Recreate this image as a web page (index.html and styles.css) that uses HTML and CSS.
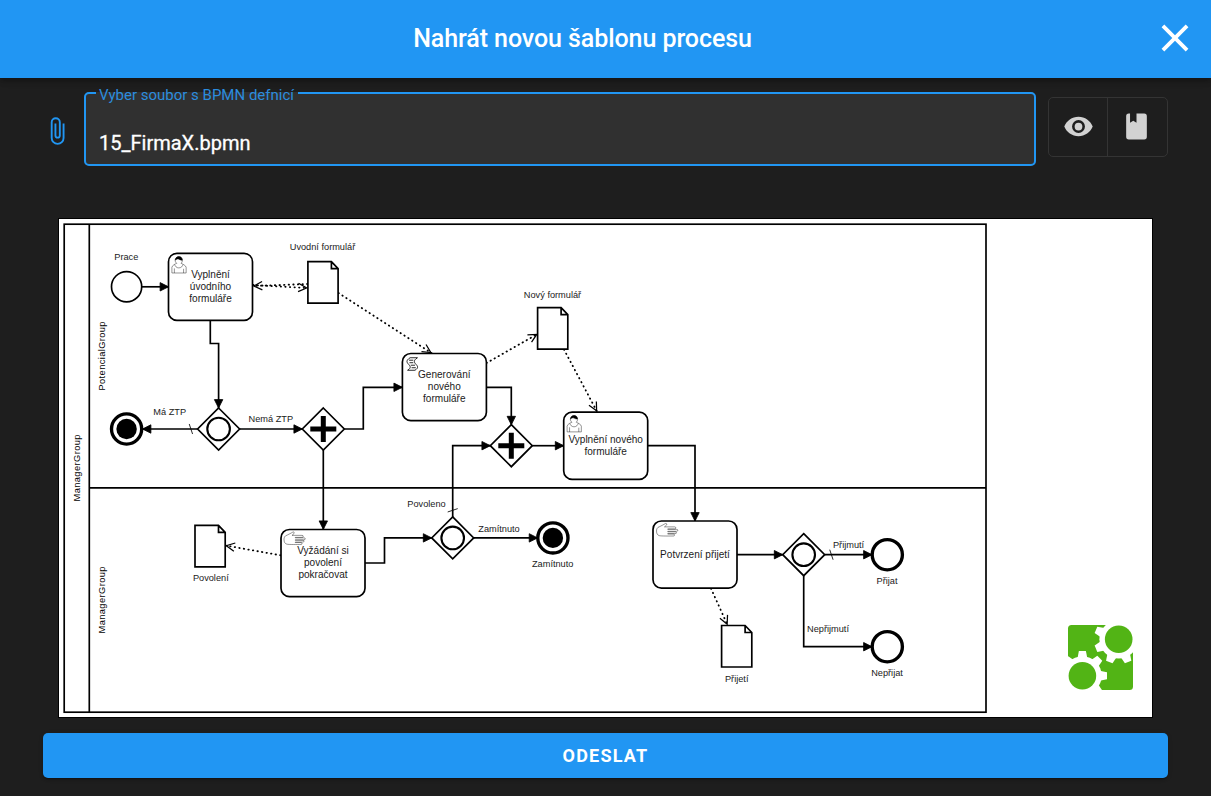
FILE: index.html
```html
<!DOCTYPE html>
<html lang="cs">
<head>
<meta charset="utf-8">
<title>Nahrát novou šablonu procesu</title>
<link rel="stylesheet" href="styles.css">
</head>
<body>
<header class="toolbar">
  <h1 class="toolbar-title">Nahrát novou šablonu procesu</h1>
  <button class="close" aria-label="Zavřít"><svg viewBox="0 0 24 24"><path d="M19 6.41L17.59 5 12 10.59 6.41 5 5 6.41 10.59 12 5 17.59 6.41 19 12 13.41 17.59 19 19 17.59 13.41 12z"/></svg></button>
</header>
<main class="content">
  <div class="file-row">
    <svg class="clip" viewBox="0 0 24 24"><path d="M16.5,6V17.5A4,4 0 0,1 12.5,21.5A4,4 0 0,1 8.5,17.5V5A2.5,2.5 0 0,1 11,2.5A2.5,2.5 0 0,1 13.5,5V15.5A1,1 0 0,1 12.5,16.5A1,1 0 0,1 11.5,15.5V6H10V15.5A2.5,2.5 0 0,0 12.5,18A2.5,2.5 0 0,0 15,15.5V5A4,4 0 0,0 11,1A4,4 0 0,0 7,5V17.5A5.5,5.5 0 0,0 12.5,23A5.5,5.5 0 0,0 18,17.5V6H16.5Z"/></svg>
    <fieldset class="field">
      <legend class="field-label">Vyber soubor s BPMN defnicí</legend>
      <div class="field-value">15_FirmaX.bpmn</div>
    </fieldset>
    <div class="btn-group">
      <button class="group-btn" aria-label="Náhled"><svg viewBox="0 0 24 24"><path d="M12 9a3 3 0 0 0-3 3 3 3 0 0 0 3 3 3 3 0 0 0 3-3 3 3 0 0 0-3-3m0 8a5 5 0 0 1-5-5 5 5 0 0 1 5-5 5 5 0 0 1 5 5 5 5 0 0 1-5 5m0-12.500C7 4.500 2.730 7.610 1 12c1.730 4.390 6 7.500 11 7.500s9.270-3.110 11-7.500c-1.730-4.390-6-7.500-11-7.500z"/></svg></button>
      <button class="group-btn" aria-label="Kniha"><svg viewBox="0 0 24 24"><path d="M18 22a2 2 0 0 0 2-2V4a2 2 0 0 0-2-2h-6v7L9.500 7.500 7 9V2H6a2 2 0 0 0-2 2v16a2 2 0 0 0 2 2h12z"/></svg></button>
    </div>
  </div>

  <div class="canvas">
    <svg class="diagram" viewBox="59 219 1093 498">
      <defs>
        <marker id="flow-end" viewBox="0 0 20 20" refX="11" refY="10" markerWidth="16.76" markerHeight="16.76" markerUnits="userSpaceOnUse" orient="auto"><path d="M1 5L11 10 1 15Z" class="mk-solid"/></marker>
        <marker id="assoc-end" viewBox="0 0 20 20" refX="12" refY="10" markerWidth="16.76" markerHeight="16.76" markerUnits="userSpaceOnUse" orient="auto"><path d="M1 5L11 10 1 15" class="mk-open"/></marker>
        <marker id="default-start" viewBox="0 0 20 20" refX="0" refY="10" markerWidth="16.76" markerHeight="16.76" markerUnits="userSpaceOnUse" orient="auto"><path d="M6 4L10 16" class="mk-slash"/></marker>
        <g id="task"><rect width="84" height="67.100" rx="8.400" class="shape"/></g>
        <g id="gateway"><path d="M0-21L21 0 0 21-21 0Z" class="shape"/></g>
        <g id="inclusive"><use href="#gateway"/><circle r="11.300" class="ring"/></g>
        <g id="parallel"><use href="#gateway"/><path d="M-13 0H13M0-13V13" class="plus"/></g>
        <g id="end"><circle r="15.100" class="end"/></g>
        <g id="terminate"><use href="#end"/><circle r="10.200"/></g>
        <g id="doc"><path d="M0 0H23.500L30.200 7V41.500H0ZM23.500 0V7H30.200" class="shape"/></g>
        <g id="user" transform="scale(.838)" class="icon">
          <path d="m15,12c.909-.845 1.594-2.049 1.594-3.385 0-2.554-1.805-4.622-4.357-4.622s-4.288 2.068-4.288 4.622c0 1.348.974 2.562 1.896 3.405-.529.187-5.669 2.097-5.794 4.756v6.718h17v-6.718c0-2.298-5.528-4.595-6.051-4.776zm-8 6v5.500m11 0v-5"/>
          <path d="m17.162,13.009c0 2.447-2.158 4.431-4.821 4.431-2.665 0-4.822-1.981-4.822-4.431"/>
          <path class="hair" d="m8.100,8.200c0 0 2.251-2.358 4.274-1.177 2.024 1.181 4.221 1.537 4.124.965-.098-.570-.117-3.791-4.191-4.136-3.572.001-4.208 3.670-4.207 4.348z"/>
        </g>
        <g id="script" transform="scale(.838)"><path class="icon-dark" d="m15,20c9.967-6.273-8.001-7.919 2.969-14.938h-8.803c-10.970 7.019 6.998 8.665-2.969 14.938zm-7-12h5m-4.500 3h4.500m-3 3h5m-4 3h5"/></g>
        <g id="hand" class="icon" transform="scale(.838)"><path d="M17 15h9c.900 0 1.400-.200 1.400-.900 0-.800-.500-1.200-1.300-1.200H17v-.600h10.600c.900 0 1.400-.400 1.400-1.200s-.500-1.100-1.400-1.100H17V9.400h8.200c.900 0 1.400-.400 1.400-1.200s-.500-1.200-1.400-1.200H13.100c.400-.400 2-1.600 2.400-2.100.400-.500.400-1.200.100-1.600-.400-.500-1.100-.500-1.500-.200C12.600 4 8 6.500 5.400 7.600 4.200 8.500 3.600 10 3.600 12c0 3 1.100 4.900 3.400 5.500 2 .600 13 .400 16.800.400.900 0 1.300-.400 1.300-1.100 0-.800-.500-1.200-1.300-1.200H17Z"/></g>
      </defs>

      <g class="shape">
        <rect x="64.200" y="224.200" width="921.800" height="488"/>
        <path d="M89.300 224.200V712.200M89.300 487.800H986" class="lane"/>
      </g>

      <g class="assoc">
        <path d="M253 285L307.500 288"/>
        <path d="M307.500 284L253 286"/>
        <path d="M338.500 293L431.500 353"/>
        <path d="M486.500 363L537.500 334"/>
        <path d="M564 349.500L597 411.500"/>
        <path d="M280.500 555.300L225.500 545.500"/>
        <path d="M711 588.500L727.500 625"/>
      </g>
      <g class="flow">
        <path d="M142 286.800H168.500"/>
        <path d="M210.300 320.500V343.500H218.600V408"/>
        <path d="M197.600 429H142.500" marker-start="url(#default-start)"/>
        <path d="M239.600 429H302.300"/>
        <path d="M344.300 429H363.300V387.300H402.300"/>
        <path d="M323.300 450V529.300"/>
        <path d="M486.500 387.300H511.300V424.700"/>
        <path d="M452.700 517V445.700H490.300" marker-start="url(#default-start)"/>
        <path d="M532.300 445.700H563.700"/>
        <path d="M647.700 445.700H695V521"/>
        <path d="M365 563H384.500V537.900H431.700"/>
        <path d="M473.700 537.900H537.600"/>
        <path d="M737 554.700H782.700"/>
        <path d="M824.700 554.700H872" marker-start="url(#default-start)"/>
        <path d="M803.700 575.700V646.700H872"/>
      </g>

      <circle cx="126.600" cy="286.700" r="15.100" class="shape"/>
      <use href="#task" x="168.500" y="253.300"/><use href="#user" x="168.500" y="253.300"/>
      <use href="#task" x="402.400" y="353.500"/><use href="#script" x="402.400" y="353.500"/>
      <use href="#task" x="563.700" y="412.200"/><use href="#user" x="563.700" y="412.200"/>
      <use href="#task" x="281" y="529.500"/><use href="#hand" x="281" y="529.500"/>
      <use href="#task" x="653" y="521"/><use href="#hand" x="653.500" y="521"/>
      <use href="#doc" x="307.900" y="261.700"/>
      <use href="#doc" x="537.600" y="307.700"/>
      <use href="#doc" x="195" y="525.300"/>
      <use href="#doc" x="721.600" y="625.500"/>
      <use href="#inclusive" x="218.600" y="429"/>
      <use href="#parallel" x="323.300" y="429"/>
      <use href="#parallel" x="511.300" y="445.700"/>
      <use href="#inclusive" x="452.700" y="537.900"/>
      <use href="#inclusive" x="803.700" y="554.700"/>
      <use href="#terminate" x="126.600" y="429"/>
      <use href="#terminate" x="552.900" y="537.900"/>
      <use href="#end" x="887.300" y="554.700"/>
      <use href="#end" x="887.300" y="646.700"/>

      <g class="task-text">
        <text x="210.500" y="278">Vyplnění</text><text x="210.500" y="290">úvodního</text><text x="210.500" y="302">formuláře</text>
        <text x="444.300" y="378">Generování</text><text x="444.300" y="390">nového</text><text x="444.300" y="402">formuláře</text>
        <text x="605.700" y="443">Vyplnění nového</text><text x="605.700" y="455">formuláře</text>
        <text x="323" y="554">Vyžádání si</text><text x="323" y="566">povolení</text><text x="323" y="578">pokračovat</text>
        <text x="695" y="558">Potvrzení přijetí</text>
      </g>
      <g class="lane-text">
        <text transform="translate(104.500 356) rotate(-90)" textLength="69">PotencialGroup</text>
        <text transform="translate(79.500 468) rotate(-90)" textLength="67">ManagerGroup</text>
        <text transform="translate(104.500 600) rotate(-90)" textLength="67">ManagerGroup</text>
      </g>
      <g class="label-text">
        <text x="126.300" y="260">Prace</text>
        <text x="322.500" y="250">Uvodní formulář</text>
        <text x="552.500" y="298">Nový formulář</text>
        <text x="169.700" y="415">Má ZTP</text>
        <text x="270.800" y="422">Nemá ZTP</text>
        <text x="426.500" y="507">Povoleno</text>
        <text x="499" y="532">Zamítnuto</text>
        <text x="552.700" y="567">Zamítnuto</text>
        <text x="210.800" y="581">Povolení</text>
        <text x="848.600" y="548">Přijmutí</text>
        <text x="887" y="584">Přijat</text>
        <text x="828" y="632">Nepřijmutí</text>
        <text x="887" y="676">Nepřijat</text>
        <text x="736.700" y="682">Přijetí</text>
      </g>

      <defs><path id="tooth" class="cut" d="M-5.200-16L-3.500-24.600H3.500L5.200-16Z"/></defs>
      <g transform="translate(1068 625)">
        <rect width="65" height="65" rx="3.500" class="green"/>
        <path class="cut" d="M50-1H66V15H50ZM-1 50H15V66H-1Z"/>
        <g transform="translate(50.700 14.300)">
          <circle r="19.300" class="cut"/>
          <use href="#tooth" transform="rotate(-67.500)"/><use href="#tooth" transform="rotate(-112.500)"/><use href="#tooth" transform="rotate(-157.500)"/><use href="#tooth" transform="rotate(157.500)"/><use href="#tooth" transform="rotate(112.500)"/>
          <circle r="13.800" class="green"/>
        </g>
        <g transform="translate(14.400 50.700)">
          <circle r="19.300" class="cut"/>
          <use href="#tooth"/><use href="#tooth" transform="rotate(45)"/><use href="#tooth" transform="rotate(90)"/><use href="#tooth" transform="rotate(135)"/><use href="#tooth" transform="rotate(-45)"/>
          <circle r="13.800" class="green"/>
        </g>
      </g>
    </svg>
  </div>
  <button class="submit">ODESLAT</button>
</main>
</body>
</html>
```

FILE: styles.css
```css
* { box-sizing: border-box; }
body {
  margin: 0;
  height: 796px;
  overflow: hidden;
  display: flex;
  flex-direction: column;
  background: #1e1e1e;
  color: #fff;
  font-family: Roboto, sans-serif;
}
button { border: 0; padding: 0; font: inherit; color: inherit; background: none; }
svg { display: block; fill: currentColor; }

.toolbar {
  flex: none;
  height: 78px;
  display: grid;
  grid-template-columns: 1fr auto 1fr;
  align-items: center;
  padding: 0 13px 0 0;
  background: #2196f3;
  box-shadow: 0 2px 4px -1px rgba(0,0,0,.2), 0 4px 5px rgba(0,0,0,.14), 0 1px 10px rgba(0,0,0,.12);
}
.toolbar-title {
  grid-column: 2;
  margin: 0 0 0 -33px;
  font-size: 25px;
  font-weight: 500;
  letter-spacing: -.08px;
  line-height: 32px;
}
.close { justify-self: end; }
.close svg { width: 46px; height: 46px; margin-bottom: 2px; }

.content { display: flex; flex-direction: column; padding: 14px 43px 0; }
.file-row { display: flex; height: 74px; }
.clip { flex: none; width: 30px; height: 30px; margin: 24px 12px 0 -1px; color: #2196f3; }
.field {
  flex: 1;
  min-width: 0;
  margin: 0;
  padding: 0 13px;
  border: 2px solid #2196f3;
  border-radius: 5px;
  background: #303030;
}
.field-label {
  height: 2px;
  margin-left: -3px;
  padding: 0 4px 0 3px;
  color: #2b8cde;
  font-size: 15px;
  line-height: 7px;
  white-space: nowrap;
}
.field-value {
  padding-top: 35px;
  font-size: 20px;
  line-height: 28px;
  -webkit-text-stroke: .3px #fff;
}
.btn-group {
  display: flex;
  width: 120px;
  height: 60px;
  margin: 5px 0 0 12px;
  border: 1px solid #343434;
  border-radius: 5px;
  color: #d2d2d2;
}
.group-btn { width: 58px; display: flex; align-items: center; justify-content: center; padding-bottom: 1px; }
.group-btn + .group-btn { width: 60px; border-left: 1px solid #343434; padding-right: 2px; }
.group-btn svg { width: 31px; height: 31px; }

.canvas { height: 500px; margin: 52px 15px 0; border: 1px solid #000; background: #fff; }
.diagram { width: 1093px; height: 498px; fill: #000; }
.shape { fill: #fff; stroke: #000; stroke-width: 1.680; }
.lane { fill: none; }
.ring { fill: #fff; stroke: #000; stroke-width: 2.100; }
.end { fill: #fff; stroke: #000; stroke-width: 3.350; }
.plus { stroke: #000; stroke-width: 5; }
.flow path { fill: none; stroke: #000; stroke-width: 1.680; marker-end: url(#flow-end); }
.assoc path { fill: none; stroke: #000; stroke-width: 1.800; stroke-dasharray: .42 4.190; stroke-linecap: round; marker-end: url(#assoc-end); }
/* Markers inherit the dash pattern of their definition only, so they stay solid. */
.mk-solid { fill: #000; stroke: #000; }
.mk-open { fill: none; stroke: #000; stroke-width: 1.500; }
.mk-slash { stroke: #000; }
.icon { fill: #fff; stroke: #000; stroke-width: .5; }
.hair { fill: #000; }
.icon-dark { fill: #fff; stroke: #000; }
.task-text, .label-text, .lane-text { font-family: "Liberation Sans", Arial, sans-serif; text-anchor: middle; }
.task-text { font-size: 10.050px; fill: #1a1a1a; }
.lane-text { font-size: 9.300px; }
.label-text { font-size: 9.210px; fill: #1a1a1a; }
.green { fill: #52b415; }
.cut { fill: #fff; }

.submit {
  height: 45px;
  margin-top: 15px;
  border-radius: 5px;
  background: #2196f3;
  font-size: 18px;
  font-weight: 700;
  letter-spacing: 1.200px;
  box-shadow: 0 3px 1px -2px rgba(0,0,0,.2), 0 2px 2px rgba(0,0,0,.14), 0 1px 5px rgba(0,0,0,.12);
}
```
